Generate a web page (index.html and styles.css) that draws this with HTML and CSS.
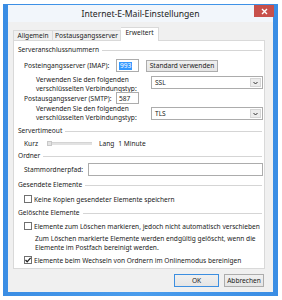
FILE: index.html
```html
<!DOCTYPE html>
<html lang="de">
<head>
<meta charset="utf-8">
<link rel="stylesheet" href="styles.css">
</head>
<body>
<div class="window">
  <div class="titlebar">
    <span></span>
    <span class="title">Internet-E-Mail-Einstellungen</span>
    <span class="close"><svg width="7" height="7" viewBox="0 0 7 7"><path d="M1 1L6 6M6 1L1 6" stroke="#fff" stroke-width="1.4"/></svg></span>
  </div>
  <div class="client">
    <div class="tabs">
      <div class="tab t1">Allgemein</div>
      <div class="tab t2">Postausgangsserver</div>
      <div class="tab active">Erweitert</div>
    </div>
    <div class="panel">
      <div class="hdr">Serveranschlussnummern</div>
      <div class="row r-imap">
        <span class="lbl">Posteingangsserver (IMAP):</span>
        <span class="input port"><span class="sel">993</span></span>
        <span class="btn std">Standard verwenden</span>
      </div>
      <div class="row r-enc">
        <span class="enc-lbl">Verwenden Sie den folgenden<br>verschlüsselten Verbindungstyp:</span>
        <span class="combo"><span class="cv">SSL</span><span class="arrow"><svg width="5" height="4" viewBox="0 0 5 4"><path d="M0.5 1L2.5 3L4.5 1" fill="none" stroke="#333" stroke-width="1"/></svg></span></span>
      </div>
      <div class="row r-smtp">
        <span class="lbl">Postausgangsserver (SMTP):</span>
        <span class="input port">587</span>
      </div>
      <div class="row r-enc2">
        <span class="enc-lbl">Verwenden Sie den folgenden<br>verschlüsselten Verbindungstyp:</span>
        <span class="combo"><span class="cv">TLS</span><span class="arrow"><svg width="5" height="4" viewBox="0 0 5 4"><path d="M0.5 1L2.5 3L4.5 1" fill="none" stroke="#333" stroke-width="1"/></svg></span></span>
      </div>
      <div class="hdr h-timeout">Servertimeout</div>
      <div class="row r-slider">
        <span class="kurz">Kurz</span>
        <span class="slider"><span class="thumb"></span><span class="track"></span></span>
        <span class="lang">Lang</span>
        <span class="minute">1 Minute</span>
      </div>
      <div class="hdr h-ordner">Ordner</div>
      <div class="row r-path">
        <span class="lbl path-lbl">Stammordnerpfad:</span>
        <span class="input path"></span>
      </div>
      <div class="hdr h-sent">Gesendete Elemente</div>
      <div class="row chk r-sent">
        <span class="box"></span>
        <span>Keine Kopien gesendeter Elemente speichern</span>
      </div>
      <div class="hdr h-del">Gelöschte Elemente</div>
      <div class="row chk r-del">
        <span class="box"></span>
        <span>Elemente zum Löschen markieren, jedoch nicht automatisch verschieben</span>
      </div>
      <div class="note">Zum Löschen markierte Elemente werden endgültig gelöscht, wenn die<br>Elemente im Postfach bereinigt werden.</div>
      <div class="row chk r-purge">
        <span class="box"><svg width="8" height="8" viewBox="0 0 8 8"><path d="M1.5 4L3.2 5.8L6.6 1.8" fill="none" stroke="#222" stroke-width="1.3"/></svg></span>
        <span>Elemente beim Wechseln von Ordnern im Onlinemodus bereinigen</span>
      </div>
    </div>
    <div class="buttons">
      <span class="btn ok">OK</span>
      <span class="btn cancel">Abbrechen</span>
    </div>
  </div>
</div>
</body>
</html>
```
FILE: styles.css
```css
html, body {
  margin: 0;
  padding: 0;
  background: #ffffff;
}
body {
  font-family: "Noto Sans", "Open Sans", sans-serif;
  font-size: 6.6px;
  color: #1a1a1a;
  white-space: nowrap;
}
.window {
  margin: 4px 0 0 3px;
  width: 275px;
  height: 292px;
  box-sizing: border-box;
  background: linear-gradient(90deg, #3a8de4 0%, #4a9ded 50%, #3a8de4 100%);
  padding: 1px 5px 4px 5px;
  display: flex;
  flex-direction: column;
}
.titlebar {
  height: 17px;
  background: #f2f6fb;
  display: grid;
  grid-template-columns: 1fr auto 1fr;
  align-items: start;
}
.title {
  font-size: 8.6px;
  color: #222;
  line-height: 17px;
  margin-top: 1px;
}
.close {
  justify-self: end;
  width: 20px;
  height: 12px;
  margin-right: -1px;
  background: #c8504b;
  display: flex;
  align-items: center;
  justify-content: center;
}
.close svg { display: block; }
.client {
  flex: 1;
  background: #f0f0f0;
  padding: 5px 8px 0 5px;
  display: flex;
  flex-direction: column;
}
.tabs {
  height: 13px;
  display: flex;
  align-items: flex-end;
  position: relative;
  z-index: 1;
}
.tab {
  height: 10px;
  box-sizing: border-box;
  border: 1px solid #d9d9d9;
  border-bottom: none;
  background: #f0f0f0;
  display: flex;
  align-items: center;
  justify-content: center;
  line-height: 8px;
  color: #1a1a1a;
}
.t1 { width: 40px; }
.t2 { width: 68px; border-left: none; }
.active {
  width: 38px;
  height: 14px;
  margin-bottom: -1px;
  background: #ffffff;
  padding-bottom: 3px;
  border-left: none;
}
.panel {
  height: 229px;
  box-sizing: border-box;
  border: 1px solid #d9d9d9;
  background: #ffffff;
  padding: 4px 1px 0 4px;
  display: flex;
  flex-direction: column;
}
.hdr {
  height: 10px;
  display: flex;
  align-items: center;
  gap: 3px;
  margin-right: 1px;
  color: #1a1a1a;
  line-height: 10px;
}
.hdr::after {
  content: "";
  flex: 1;
  height: 0;
  border-top: 1px solid #d5d5d5;
}
.row {
  display: flex;
  align-items: center;
  padding-left: 6px;
  line-height: 9px;
}
.lbl { width: 92px; flex: none; }
.input {
  box-sizing: border-box;
  border: 1px solid #acacac;
  background: #fff;
  display: flex;
  align-items: center;
  padding-left: 2px;
}
.port { width: 23px; height: 100%; }
.sel {
  background: #3399ff;
  color: #fff;
  padding: 0 1px;
  line-height: 8px;
}
.btn {
  box-sizing: border-box;
  border: 1px solid #acacac;
  background: linear-gradient(#f0f0f0, #e5e5e5);
  display: flex;
  align-items: center;
  justify-content: center;
  color: #1a1a1a;
}
.std {
  width: 72px;
  height: 12px;
  margin-left: 7px;
}
.r-imap { height: 13px; margin-top: 4px; }
.r-enc, .r-enc2 {
  align-items: flex-start;
  padding-left: 18px;
}
.r-enc { height: 17px; margin-top: 3px; }
.r-enc2 { height: 18px; }
.enc-lbl {
  width: 115px;
  flex: none;
  line-height: 9px;
}
.combo {
  flex: 1;
  height: 13px;
  box-sizing: border-box;
  border: 1px solid #acacac;
  background: #fff;
  display: flex;
  align-items: stretch;
}
.r-enc .combo { margin-top: 1px; }
.r-enc2 .combo { margin-top: 3px; }
.cv {
  flex: 1;
  padding-left: 3px;
  display: flex;
  align-items: center;
}
.arrow {
  width: 9px;
  margin: 1px;
  background: #ececec;
  border: 1px solid #d6d6d6;
  display: flex;
  align-items: center;
  justify-content: center;
}
.arrow svg { display: block; }
.r-smtp { height: 12px; }
.h-timeout { margin-top: 4px; }
.r-slider { height: 10px; margin-top: 2px; }
.kurz { width: 23px; flex: none; }
.slider {
  width: 45px;
  height: 8px;
  display: flex;
  align-items: center;
  flex: none;
}
.thumb {
  width: 5px;
  height: 5px;
  background: #e3e3e3;
  border: 1px solid #c8c8c8;
  box-sizing: border-box;
  flex: none;
}
.track {
  flex: 1;
  height: 2px;
  background: #e2e2e2;
  border-top: 1px solid #d4d4d4;
}
.lang { margin-left: 7px; }
.minute { margin-left: 4px; }
.h-ordner { margin-top: 3px; }
.r-path { height: 13px; margin-top: 2px; }
.path-lbl { width: 64px; }
.path { flex: 1; height: 100%; }
.h-sent { margin-top: 4px; }
.chk { height: 10px; gap: 2px; }
.box {
  width: 8px;
  height: 8px;
  box-sizing: border-box;
  border: 1px solid #707070;
  background: #fff;
  flex: none;
}
.box svg {
  display: block;
  margin: -1px;
}
.r-sent { margin-top: 4px; }
.h-del { margin-top: 4px; }
.r-del { margin-top: 3px; }
.note {
  margin-top: 3px;
  height: 18px;
  padding-left: 17px;
  line-height: 9px;
}
.r-purge { margin-top: 3px; }
.buttons {
  margin-top: 5px;
  height: 13px;
  display: flex;
  justify-content: flex-end;
  gap: 5px;
  padding-right: 1px;
}
.ok {
  width: 45px;
  border-color: #3c8ee0;
}
.cancel { width: 40px; }
```
